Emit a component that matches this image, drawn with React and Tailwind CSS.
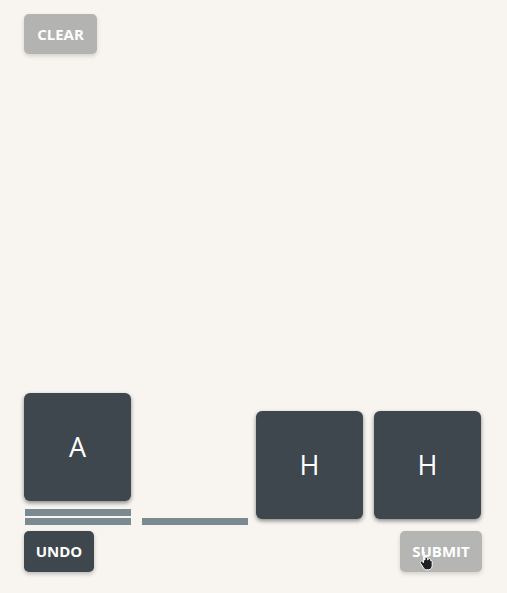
import React from 'react';

const FONT = { fontFamily: '"Open Sans", "Noto Sans", sans-serif' };

const Tile = ({ letter, className = '' }) => (
  <div
    className={`w-[107px] h-[108px] rounded-[6px] bg-[#3d474d] shadow-[0_2px_4px_rgba(0,0,0,0.45)] flex items-center justify-center text-white text-[27px] ${className}`}
  >
    {letter}
  </div>
);

const Bar = () => <div className="w-[106px] h-[7px] bg-[#7b8991]" />;

const HandCursor = () => (
  <svg width="16" height="20" viewBox="0 0 16 20" className="absolute left-[19px] top-[20px]">
    <path
      d="M4 1.5c.8 0 1.4.6 1.4 1.4V9l.6-.1V7.6c0-.8.6-1.3 1.3-1.3s1.3.5 1.3 1.3v1.2l.5-.1c0-.8.6-1.2 1.3-1.2s1.2.5 1.2 1.3v.8l.4-.1c.7 0 1.2.5 1.2 1.2v3.8c0 2.2-1.4 4.3-3.8 4.3H7.6c-1.4 0-2.2-.6-3-1.7L1.5 12.2c-.5-.7-.3-1.5.3-1.9.6-.4 1.3-.2 1.7.3l.9 1.2V2.9c0-.8.6-1.4 1.4-1.4z"
      fill="#1f2224"
      stroke="#ffffff"
      strokeWidth="1"
    />
  </svg>
);

export default function App() {
  return (
    <div className="w-full h-[593px] bg-[#f8f5f0] flex flex-col px-6 pt-[14px] pb-[21px]" style={FONT}>
      <div>
        <button
          type="button"
          className="w-[73px] h-[40px] rounded-[5px] bg-[#b3b3b1] text-white text-[15px] font-bold shadow-[0_2px_4px_rgba(0,0,0,0.15)]"
        >
          CLEAR
        </button>
      </div>

      <div className="flex-1" />

      <div className="flex items-end gap-[10px] w-[458px]">
        <div className="flex flex-col items-start">
          <Tile letter="A" />
          <div className="mt-[8px] flex flex-col gap-[2px] pl-px">
            <Bar />
            <Bar />
          </div>
        </div>
        <div className="flex flex-col w-[108px] pl-px">
          <Bar />
        </div>
        <div className="flex flex-col ml-[-3px]">
          <Tile letter="H" className="h-[107px] mb-[6px]" />
        </div>
        <div className="flex flex-col ml-px">
          <Tile letter="H" className="h-[107px] mb-[6px]" />
        </div>
      </div>

      <div className="mt-[6px] flex justify-between w-[458px]">
        <button
          type="button"
          className="w-[70px] h-[41px] rounded-[5px] bg-[#3d474d] text-white text-[15px] font-bold shadow-[0_2px_4px_rgba(0,0,0,0.25)]"
        >
          UNDO
        </button>
        <button
          type="button"
          className="relative w-[82px] h-[41px] rounded-[5px] bg-[#b5b5b3] text-white text-[15px] font-bold shadow-[0_2px_4px_rgba(0,0,0,0.15)]"
        >
          SUBMIT
          <HandCursor />
        </button>
      </div>
    </div>
  );
}
